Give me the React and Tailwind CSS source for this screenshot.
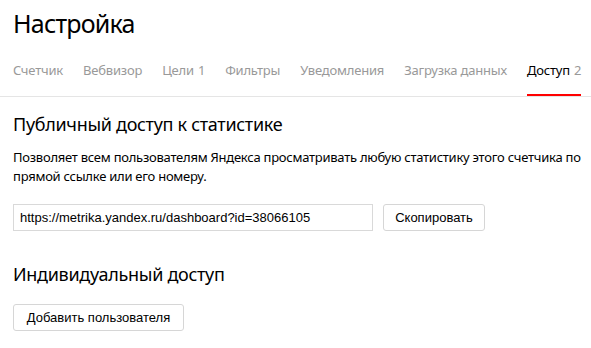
const tabs = [
  { label: 'Счетчик' },
  { label: 'Вебвизор' },
  { label: 'Цели', count: 1 },
  { label: 'Фильтры' },
  { label: 'Уведомления' },
  { label: 'Загрузка данных' },
  { label: 'Доступ', count: 2, active: true },
]

const btnClass = 'h-[27px] rounded-[3px] border border-[#d6d6d6] bg-white font-["Liberation_Sans",Arial,sans-serif] text-[13px] text-black'

export default function App() {
  return (
    <div className="h-[348px] w-[591px] overflow-hidden bg-white font-['Noto_Sans',sans-serif] text-black">
      {/* Header */}
      <h1 className="px-[13px] pt-[7px] text-[25px] font-normal leading-[32px] tracking-[-0.8px]">Настройка</h1>

      {/* Tabs */}
      <nav className="mt-[21px] flex gap-[20px] border-b border-[#e5e5e5] px-[13px]">
        {tabs.map((t) => (
          <div
            key={t.label}
            className={`shrink-0 whitespace-nowrap border-b-2 pb-[14px] text-[13px] leading-[20px] tracking-[-0.2px] ${t.active ? 'border-[#f00] text-black' : 'border-transparent text-[#999]'}`}
          >
            {t.label}
            {t.count && <span className="ml-[4px] text-[#999]">{t.count}</span>}
          </div>
        ))}
      </nav>

      {/* Public access */}
      <section className="px-[13px] pt-[15px]">
        <h2 className="text-[18px] font-normal leading-[24px] tracking-[-0.3px]">Публичный доступ к статистике</h2>
        <p className="mt-[12px] whitespace-nowrap text-[13px] leading-[19px] tracking-[-0.25px]">
          Позволяет всем пользователям Яндекса просматривать любую статистику этого счетчика по
          <br />
          прямой ссылке или его номеру.
        </p>
        <div className="mt-[18px] flex gap-[10px]">
          <input
            readOnly
            value="https://metrika.yandex.ru/dashboard?id=38066105"
            className="h-[27px] w-[360px] border border-[#d9d9d9] px-[6px] font-['Liberation_Sans',Arial,sans-serif] text-[13px] text-black outline-none"
          />
          <button className={`${btnClass} w-[102px]`}>Скопировать</button>
        </div>
      </section>

      {/* Individual access */}
      <section className="px-[13px] pt-[31px]">
        <h2 className="text-[18px] font-normal leading-[24px] tracking-[-0.3px]">Индивидуальный доступ</h2>
        <button className={`${btnClass} mt-[18px] w-[171px]`}>Добавить пользователя</button>
      </section>
    </div>
  )
}
